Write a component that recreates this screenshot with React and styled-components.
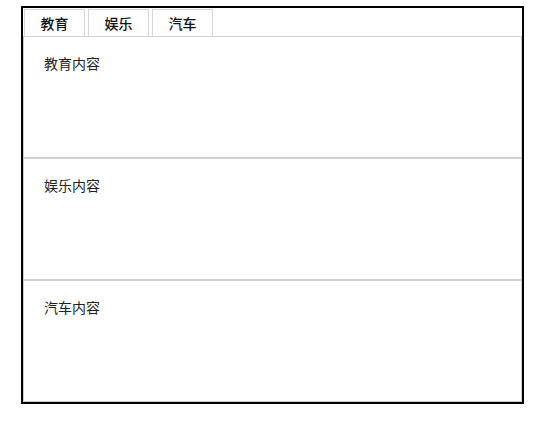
import React, { useState } from 'react';
import styled, { createGlobalStyle } from 'styled-components';

const GlobalStyle = createGlobalStyle`
  body {
    margin: 0;
    background: #fff;
    font-family: "Liberation Sans", "Noto Sans CJK SC", sans-serif;
  }
`;

const tabs = [
  { id: 'edu', label: '教育', content: '教育内容' },
  { id: 'fun', label: '娱乐', content: '娱乐内容' },
  { id: 'car', label: '汽车', content: '汽车内容' },
];

export default function App() {
  const [active, setActive] = useState('edu');

  return (
    <>
      <GlobalStyle />
      <Container>
        <TabBar>
          {tabs.map((tab) => (
            <Tab key={tab.id} active={active === tab.id} onClick={() => setActive(tab.id)}>
              {tab.label}
            </Tab>
          ))}
        </TabBar>
        {tabs.map((tab) => (
          <Panel key={tab.id}>{tab.content}</Panel>
        ))}
      </Container>
    </>
  );
}

const Container = styled.div`
  margin: 6px 0 0 21px;
  width: 499px;
  height: 394px;
  border: 2px solid #000;
  display: flex;
  flex-direction: column;
`;

const TabBar = styled.div`
  display: flex;
  gap: 3px;
  padding: 1px 0 0 1px;
  height: 27px;
`;

const Tab = styled.button`
  width: 61px;
  height: 27px;
  padding: 0;
  border: 1px solid #d6d6d6;
  border-bottom: none;
  background: #fff;
  font-family: "Noto Sans CJK SC", sans-serif;
  font-size: 14px;
  font-weight: 500;
  color: #111;
  cursor: pointer;
`;

const Panel = styled.div`
  flex: 1;
  border: 1px solid #cfcfcf;
  padding: 18px 20px;
  font-family: "Noto Sans CJK SC", sans-serif;
  font-size: 14px;
  line-height: 1.2;
  color: #222;
`;
